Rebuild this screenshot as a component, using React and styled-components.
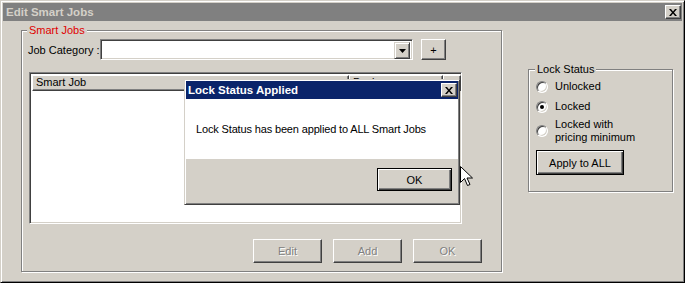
import React from 'react';
import styled, { createGlobalStyle } from 'styled-components';

const GlobalStyle = createGlobalStyle`
  html, body {
    margin: 0;
    padding: 0;
    background: #d4d0c8;
  }
  body {
    font-family: "Liberation Sans", Arial, sans-serif;
    font-size: 11px;
    color: #000;
  }
`;

// main window frame
const Window = styled.div`
  position: relative;
  box-sizing: border-box;
  width: 685px;
  height: 283px;
  padding: 2px;
  background: #d4d0c8;
  border: 1px solid;
  border-color: #d4d0c8 #000 #000 #d4d0c8;
  box-shadow: inset 1px 1px 0 #fff, inset -1px -1px 0 #808080;
  display: flex;
  flex-direction: column;
`;

const TitleBar = styled.div`
  height: 18px;
  display: flex;
  align-items: center;
  justify-content: space-between;
  padding: 0 1px 0 3px;
  background: ${p => (p.$active ? '#0a246a' : '#808080')};
  color: ${p => (p.$active ? '#fff' : '#d4d0c8')};
  font-weight: bold;
  font-size: 11.5px;
`;

const CloseBtn = styled.div`
  box-sizing: border-box;
  width: 16px;
  height: 14px;
  display: flex;
  align-items: center;
  justify-content: center;
  background: #d4d0c8;
  border: 1px solid;
  border-color: #fff #404040 #404040 #fff;
  box-shadow: inset -1px -1px 0 #808080;
`;

const Body = styled.div`
  position: relative;
  flex: 1;
  display: flex;
  align-items: flex-start;
  padding: 9px 0 0 18px;
`;

// etched group box
const Group = styled.div`
  position: relative;
  box-sizing: border-box;
  flex: none;
  width: ${p => p.$w}px;
  height: ${p => p.$h}px;
  margin: ${p => p.$m || '0'};
  padding: ${p => p.$pad || '0'};
  border: 1px solid #808080;
  box-shadow: inset 1px 1px 0 #fff, 1px 1px 0 #fff;
  display: flex;
  flex-direction: column;
`;

const Legend = styled.span`
  position: absolute;
  top: -7px;
  left: ${p => p.$left || 5}px;
  padding: 0 2px;
  line-height: 13px;
  background: #d4d0c8;
  color: ${p => p.$color || '#000'};
`;

const FieldRow = styled.div`
  display: flex;
  align-items: center;
  height: 21px;
`;

const Label = styled.span`
  width: 72px;
  white-space: nowrap;
`;

const Sunken = styled.div`
  box-sizing: border-box;
  background: #fff;
  border: 1px solid;
  border-color: #808080 #fff #fff #808080;
  box-shadow: inset 1px 1px 0 #404040, inset -1px -1px 0 #d4d0c8;
`;

const Combo = styled(Sunken)`
  width: 313px;
  height: 21px;
  display: flex;
  justify-content: flex-end;
  padding: 2px;
`;

const ComboArrow = styled.div`
  box-sizing: border-box;
  width: 16px;
  height: 17px;
  display: flex;
  align-items: center;
  justify-content: center;
  background: #d4d0c8;
  border: 1px solid;
  border-color: #d4d0c8 #404040 #404040 #d4d0c8;
  box-shadow: inset 1px 1px 0 #fff, inset -1px -1px 0 #808080;
`;

const Button = styled.div`
  box-sizing: border-box;
  flex: none;
  width: ${p => p.$w}px;
  height: ${p => p.$h}px;
  margin: ${p => p.$m || '0'};
  display: flex;
  align-items: center;
  justify-content: center;
  background: #d4d0c8;
  border: 1px solid;
  border-color: ${p => (p.$default ? '#000' : '#fff #404040 #404040 #fff')};
  box-shadow: ${p =>
    p.$default
      ? 'inset 1px 1px 0 #fff, inset -1px -1px 0 #404040, inset -2px -2px 0 #808080'
      : 'inset -1px -1px 0 #808080'};
  color: ${p => (p.$disabled ? '#808080' : '#000')};
  text-shadow: ${p => (p.$disabled ? '1px 1px 0 #fff' : 'none')};
`;

const ListView = styled(Sunken)`
  width: 433px;
  height: 152px;
  margin: 12px 0 0 1px;
  padding: 2px;
`;

const HeaderRow = styled.div`
  display: flex;
  height: 16px;
`;

const HeaderCell = styled.div`
  box-sizing: border-box;
  width: ${p => p.$w}px;
  flex: none;
  padding-left: 3px;
  line-height: 13px;
  background: #d4d0c8;
  border: 1px solid;
  border-color: #fff #404040 #404040 #fff;
  box-shadow: inset -1px -1px 0 #808080;
  overflow: hidden;
  white-space: nowrap;
`;

const ButtonRow = styled.div`
  display: flex;
  justify-content: flex-end;
  gap: 11px;
  margin-top: 15px;
`;

const RadioRow = styled.div`
  display: flex;
  align-items: center;
  gap: 7px;
  margin-top: ${p => p.$mt || 0}px;
`;

const Radio = styled.div`
  box-sizing: border-box;
  flex: none;
  width: 12px;
  height: 12px;
  border-radius: 50%;
  background: #fff;
  border: 1px solid;
  border-color: #808080 #fff #fff #808080;
  box-shadow: inset 1px 1px 0 #404040, inset -1px -1px 0 #d4d0c8;
  display: flex;
  align-items: center;
  justify-content: center;

  &::after {
    content: '';
    width: 4px;
    height: 4px;
    border-radius: 50%;
    background: ${p => (p.$checked ? '#000' : 'transparent')};
  }
`;

const RadioText = styled.span`
  line-height: 13px;
`;

// message box lying over the form
const Dialog = styled.div`
  position: absolute;
  left: 181px;
  top: 58px;
  box-sizing: border-box;
  width: 276px;
  height: 126px;
  padding: 1px;
  background: #d4d0c8;
  border: 1px solid;
  border-color: #d4d0c8 #404040 #404040 #d4d0c8;
  box-shadow: inset 1px 1px 0 #fff, inset -1px -1px 0 #808080;
  display: flex;
  flex-direction: column;
`;

const DialogTitle = styled(TitleBar)`
  height: 18px;
  padding: 0 1px 0 2px;
  font-size: 11.5px;
`;

const Message = styled.div`
  height: 60px;
  background: #fff;
  display: flex;
  align-items: center;
  padding-left: 10px;
  letter-spacing: -0.15px;
`;

const DialogFooter = styled.div`
  display: flex;
  justify-content: flex-end;
  padding: 9px 6px 0 0;
`;

const Cursor = styled.svg`
  position: absolute;
  left: 457px;
  top: 145px;
`;

const XGlyph = () => (
  <svg width="8" height="7" viewBox="0 0 8 7">
    <path d="M0 0h2l2 2.4 2-2.4h2L5 3.5 8 7H6L4 4.6 2 7H0l3-3.5z" fill="#000" />
  </svg>
);

function App() {
  return (
    <>
      <GlobalStyle />
      <Window>
        <TitleBar>
          <span>Edit Smart Jobs</span>
          <CloseBtn><XGlyph /></CloseBtn>
        </TitleBar>
        <Body>
          <Group $w={481} $h={242} $pad="8px 19px 0 6px">
            <Legend $color="#e00000" $left={5}>Smart Jobs</Legend>
            <FieldRow>
              <Label>Job Category :</Label>
              <Combo>
                <ComboArrow>
                  <svg width="7" height="4" viewBox="0 0 7 4">
                    <path d="M0 0h7L3.5 4z" fill="#000" />
                  </svg>
                </ComboArrow>
              </Combo>
              <Button $w={25} $h={21} $m="0 0 0 8px">+</Button>
            </FieldRow>
            <ListView>
              <HeaderRow>
                <HeaderCell $w={317}>Smart Job</HeaderCell>
                <HeaderCell $w={94}>Package</HeaderCell>
                <HeaderCell $w={18} />
              </HeaderRow>
            </ListView>
            <ButtonRow>
              <Button $w={69} $h={24} $disabled>Edit</Button>
              <Button $w={69} $h={24} $disabled>Add</Button>
              <Button $w={69} $h={24} $disabled>OK</Button>
            </ButtonRow>
          </Group>

          <Group $w={145} $h={123} $m="39px 0 0 26px" $pad="10px 0 0 7px">
            <Legend $left={6}>Lock Status</Legend>
            <RadioRow>
              <Radio />
              <RadioText>Unlocked</RadioText>
            </RadioRow>
            <RadioRow $mt={7}>
              <Radio $checked />
              <RadioText>Locked</RadioText>
            </RadioRow>
            <RadioRow $mt={5}>
              <Radio />
              <RadioText>Locked with<br />pricing minimum</RadioText>
            </RadioRow>
            <Button $w={88} $h={25} $m="6px 0 0 0" $default>Apply to ALL</Button>
          </Group>

          <Dialog>
            <DialogTitle $active>
              <span>Lock Status Applied</span>
              <CloseBtn><XGlyph /></CloseBtn>
            </DialogTitle>
            <Message>Lock Status has been applied to ALL Smart Jobs</Message>
            <DialogFooter>
              <Button $w={75} $h={23} $default>OK</Button>
            </DialogFooter>
          </Dialog>

          <Cursor width="13" height="21" viewBox="0 0 13 21">
            <path
              d="M0.5 0.5v16l4-4 3 7 2.5-1-3-6.5h5.5z"
              fill="#fff"
              stroke="#000"
              strokeWidth="1"
              strokeLinejoin="miter"
            />
          </Cursor>
        </Body>
      </Window>
    </>
  );
}

export default App;
